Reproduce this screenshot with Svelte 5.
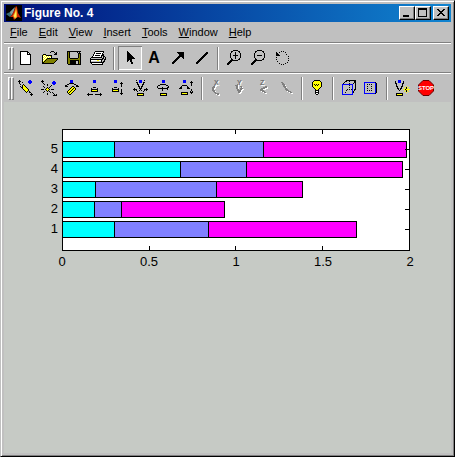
<script>
  const inks = { k: '#000', y: '#ff0', b: '#00f', w: '#fff', g: '#808080', l: '#c0c0c0', o: '#808000' };

  // Each icon is a 16 x 16 pixel map: one letter for one inked pixel.
  const art = {
    new: `

..kkkkkkkk
..kwwwwwwkk
..kwwwwwwkwk
..kwwwwwwkkkk
..kwwwwwwwwwk
..kwwwwwwwwwk
..kwwwwwwwwwk
..kwwwwwwwwwk
..kwwwwwwwwwk
..kwwwwwwwwwk
..kwwwwwwwwwk
..kwwwwwwwwwk
..kwwwwwwwwwk
..kkkkkkkkkkk`,
    open: `

.........kkk
........k...k.k
.............kk
.kkk........kkk
kywykkkkkk
kwywywywyk
kywywywywk
kwywykkkkkkkkkkk
kywykooooooooook
kwykooooooooook
kykooooooooook
kkooooooooook
kkkkkkkkkkkk`,
    save: `

.kkkkkkkkkkkkkk
.koklllllllklk
.kokllllllllkkk
.kokllllllllkok
.kokllllllllkok
.kokllllllllkok
.kokllllllllkok
.kookkkkkkkkook
.kooooooooooook
.kookkkkkkkkkok
.kookkkkkkllkok
.kookkkkkkllkok
.kookkkkkkllkok
..kkkkkkkkkkkkk`,
    print: `

.....kkkkkkkkk
....kwwwwwwwwk
....kwkkkkkwk
...kwwwwwwwwkk
...kwkkkkkwkkk
..kwwwwwwwwklkk
.kkkkkkkkkkklklk
klllllllllllkklk
kkkkkkkkkkkkklkk
kwwwwwwyywwkllk
kllllllllllklkk
kkkkkkkkkkkkkk
.kwwwwwwwwwwk
..kkkkkkkkkkk`,
    pointer: `

.....k
.....kk
.....kkk
.....kkkk
.....kkkkk
.....kkkkkk
.....kkkkkkk
.....kkkkkkkk
.....kkkkk
.....kk.kk
.....k..kk
.........kk
.........kk`,
    arrow: `


.......kkkkkkk
........kkkkkk
.........kkkkk
.........kkkkk
........kkkkkk
.......kkk..kk
......kkk....k
.....kkk
....kkk
...kkk
..kkk
..kk`,
    line: `


............kk
...........kkk
..........kkk
.........kkk
........kkk
.......kkk
......kkk
.....kkk
....kkk
...kkk
..kkk
..kk`,
    zoomIn: `
.......kkkkk
.....kk.....kk
.....k...k...k
....k....k....k
....k....k....k
....k..kkkkk..k
....k....k....k
....k....k....k
.....k...k...k
.....kk.....kk
....kkkkkkkk
...kkk
..kkk
.kkk
.kk`,
    zoomOut: `
.......kkkkk
.....kk.....kk
.....k.......k
....k.........k
....k.........k
....k..kkkkk..k
....k.........k
....k.........k
.....k.......k
.....kk.....kk
....kkkkkkkk
...kkk
..kkk
.kkk
.kk`,
    rotate: `

.......k.k
..k..k.....k
..kk
..kkk.......k
..kkkk
..............k
..k
..............k
..k
..............k
...k
.............k
.....k.....k
.......k.k`,
    orbitCamera: `
.k.........bb
kkk.......bbbb
.k..k.....bbbb
.k.........bb
..k..k
....kyk
..k.kyyk
...kkyyyk
....kyyyyk
.....kyyyyk
......kyyyk
.......kyk.k
........k..kk
.............k
............kkk
.............k`,
    orbitLight: `
.k
kkk.........bb
.k.........bbbb
..k........bbbb
...k..k.....bb
......k...k
..k......k
...k..k.k
.....kyk
kkk.kyyyk.kkk
.....kyk
...k..k.k
..k......k.k
......k.....k
......k......k.k
............kkkk
..............k`,
    pan: `
......bbb
......bbb
......bbb
.....kkkkk
...kk.....kk
.kk.........kk
.kkk....kk..kkk
.......kyyk
......kyykyk
.....kyykyyk
....kyykyyk
...kyykyyk
...kykyyk
....kyyk
.....kk`,
    dollyHorizontal: `
......bbb
......bbb
......bbb




......kkk
....k.....k
....kkkkkkk
....kyyyyyk
....kkkkkkk

.k...........k
kkkkkk..kkkkkkk
.k...........k`,
    dollyVertical: `
....bbb
....bbb
....bbb....k
..........kkk
...........k
...........k
...........k
....kkk
..k.....k
..kkkkkkk..k
..kyyyyyk..k
..kkkkkkk..k
...........k
..........kkk
...........k`,
    dollyForward: `
...k..bbb..k
......bbb
...kk.bbb.kk
....k.....k
....kk...kk
.....k...k
.....kk.kk
......k.k
.k....kkk....k
kkkk...k...kkkk
.k.k..k.k..k.k
....k.....k

....kkkkkkk
....kyyyyyk
....kkkkkkk`,
    zoomCamera: `
......bbb
......bbb
......bbb

....kkkkkk
..kk......kk
.k..........k
.k....k....kk
..kkkkkkkkkk
......k....k
......k


....kkkkkkk
....kyyyyyk
....kkkkkkk`,
    roll: `
....bbb
....bbb.....k
....bbb....kkk
............k
............k
...kkkkk....k
..k.....k
.kk.....kk
kkk.....kkk
............k
............k
...........k.k
..kkkkkkk..kkk
..kyyyyyk...k
..kkkkkkk`,
    axisX: `




.....gg
....gg
...gg
..ggg
..gg
..gg
..ggg
...gg
....gg
.....gggg
.......gg`,
    axisY: `




....g
..ggg..g
...gg..gg
...gg...g
...gg..ggg
....gg.gg
....gggg
.....ggg
.....gg`,
    axisZ: `






.........gg
.......gggg
.....gggg
....ggg
....gggg
......ggg
........gg`,
    axisNone: `


..gg
...gg
...ggg
....gg
....ggg
.....gg
......gg
......ggg
.......ggg
.........ggg
...........gg`,
    bulb: `
....kkkkkk
...kyyyyyyk
..kyyyyyyyyk
..kyyyyyyyyk
..kykykykyyk
..kyykykyyyk
..kyyyyyyyyk
...kyyyyyyk
....kyyyyk
.....kyyk
.....kkkk
.....kwwk
.....kkkk
.....kwwk
......kk`,
    perspective: `
.....kkkkkkkkkk
....kk..k....kk
...k.........kk
..k.....k...k.k
.bbbbbbbbbbb..k
.b......k..b..k
.b.........b..k
.b......k..b..k
.b.........b..k
.b....k.k.kb.kk
.b...k.....b.k
.b.........bk
.b..k......bk
.b.........b
.bbbbbbbbbbb`,
    orthographic: `


bbbbbbbbbbbk
b..........bk
b..k.k.k...bk
b..........bk
b..k...k...bk
b..........bk
b..k...k...bk
b..........bk
b..k.k.k...bk
b..........bk
b..........bk
bbbbbbbbbbbk`,
    sceneLight: `
...bbb
k..bbb..k
k..bbb..k
kk.....kk
.k.....k
.k.....k
.kk...kk...y
..k...k..y.k.y
..kk.kk...yky
...k.k..yykyyyy
....k.....yky
.........y.k.y
...........y
.kkkkkkk
.kyyyyyk
.kkkkkkk`
  };

  const letters = { axisX: 'X', axisY: 'Y', axisZ: 'Z' };

  function pixels(name) {
    const out = [];
    art[name].slice(1).split('\n').forEach((row, y) => {
      for (const m of row.matchAll(/([a-z])\1*/g)) {
        out.push({ x: m.index, y, w: m[0].length, c: inks[m[1]] });
      }
    });
    return out;
  }

  const menus = ['File', 'Edit', 'View', 'Insert', 'Tools', 'Window', 'Help'];

  const figureTools = [
    ['new', 'New figure'], ['open', 'Open'], ['save', 'Save'], ['print', 'Print'], null,
    ['pointer', 'Edit plot'], ['text', 'Insert text'], ['arrow', 'Insert arrow'], ['line', 'Insert line'], null,
    ['zoomIn', 'Zoom in'], ['zoomOut', 'Zoom out'], ['rotate', 'Rotate 3D']
  ];

  const cameraTools = [
    ['orbitCamera', 'Orbit camera'], ['orbitLight', 'Orbit scene light'], ['pan', 'Pan and tilt camera'],
    ['dollyHorizontal', 'Move camera horizontally'], ['dollyVertical', 'Move camera vertically'],
    ['dollyForward', 'Move camera forward'], ['zoomCamera', 'Zoom camera'], ['roll', 'Roll camera'], null,
    ['axisX', 'Principal axis X'], ['axisY', 'Principal axis Y'], ['axisZ', 'Principal axis Z'], ['axisNone', 'No principal axis'], null,
    ['bulb', 'Toggle scene light'], null,
    ['perspective', 'Perspective projection'], ['orthographic', 'Orthographic projection'], null,
    ['sceneLight', 'Reset camera and light'], ['stop', 'Stop']
  ];

  let tool = $state('pointer');

  const xMax = 2;
  const xTicks = [0, 0.5, 1, 1.5, 2];
  const series = [
    { label: 5, values: [0.3, 0.86, 0.827] },
    { label: 4, values: [0.682, 0.38, 0.902] },
    { label: 3, values: [0.192, 0.698, 0.495] },
    { label: 2, values: [0.187, 0.155, 0.595] },
    { label: 1, values: [0.3, 0.545, 0.854] }
  ];
</script>

{#snippet icon(name)}
  {#if name === 'text'}
    <span class="letter">A</span>
  {:else if name === 'stop'}
    <svg viewBox="0 0 16 16" aria-hidden="true">
      <path d="M5 .5h6L15.500 5v6L11 15.500H5L.5 11V5z" fill="#f00" stroke="#600" />
      <text x="8" y="10" text-anchor="middle" class="stop">STOP</text>
    </svg>
  {:else}
    <svg viewBox="0 0 16 16" shape-rendering="crispEdges" aria-hidden="true">
      {#if name.startsWith('axis')}
        {#each pixels(name) as p}
          <rect x={p.x + 1} y={p.y + 1} width={p.w} height="1" fill="#fff" />
        {/each}
      {/if}
      {#each pixels(name) as p}
        <rect x={p.x} y={p.y} width={p.w} height="1" fill={p.c} />
      {/each}
      {#if letters[name]}
        <text x="5" y="6" class="axis" fill="#fff">{letters[name]}</text>
        <text x="4" y="5" class="axis" fill="#707070">{letters[name]}</text>
      {/if}
    </svg>
  {/if}
{/snippet}

{#snippet toolbar(items, label, kind)}
  <div class="toolbar {kind}" role="toolbar" aria-label={label}>
    <span class="grip"></span><span class="grip"></span>
    {#each items as item}
      {#if item}
        <button
          class="tool"
          class:pressed={tool === item[0]}
          aria-label={item[1]}
          title={item[1]}
          disabled={item[0].startsWith('axis')}
          onclick={() => (tool = item[0])}
        >{@render icon(item[0])}</button>
      {:else}
        <span class="divider"></span>
      {/if}
    {/each}
  </div>
{/snippet}

<div class="window">
  <header>
    <svg class="logo" viewBox="0 0 16 16" aria-hidden="true">
      <rect width="16" height="16" fill="#000" />
      <path d="M0 9l4-2 3-3 2-1-3 7-2 2z" fill="#376b78" />
      <path d="M4 7l3-3 2-2-2 6-2 2z" fill="#8aa0a0" />
      <path d="M4 12l2-2 2-4 2-5 1 1 1 6 3 5-3-1-2 1-2 2-1-3z" fill="#d22808" />
      <path d="M7 11l2-4 1-5 1 5v5l-2 2-1-2z" fill="#f8b020" />
      <path d="M8 11l2-5v5l-1 2z" fill="#ffef60" />
    </svg>
    <h1>Figure No. 4</h1>
    <button class="caption" aria-label="Minimize">
      <svg viewBox="0 0 12 10" shape-rendering="crispEdges"><path d="M2 7h6v2H2z" /></svg>
    </button>
    <button class="caption" aria-label="Maximize">
      <svg viewBox="0 0 12 10" shape-rendering="crispEdges"><path fill-rule="evenodd" d="M1 0h9v9H1zM2 2v6h7V2z" /></svg>
    </button>
    <button class="caption close" aria-label="Close">
      <svg viewBox="0 0 12 10" shape-rendering="crispEdges"><path d="M2 1h2v1h1v1h2V2h1V1h2v1H9v1H8v1H7v1h1v1h1v1h1v1H8V7H7V6H5v1H4v1H2V7h1V6h1V5h1V4H4V3H3V2H2z" /></svg>
    </button>
  </header>

  <nav>
    {#each menus as menu}
      <button><u>{menu[0]}</u>{menu.slice(1)}</button>
    {/each}
  </nav>

  {@render toolbar(figureTools, 'Figure', 'figure')}
  {@render toolbar(cameraTools, 'Camera', 'camera')}

  <main>
    <div class="plot">
      {#each series as row}
        <div class="row">
          <span class="ylabel">{row.label}</span>
          {#each row.values as value, i}
            <span class="bar s{i}" style:width="{(value / xMax) * 100}%"></span>
          {/each}
          <span class="ytick"></span>
        </div>
      {/each}
      {#each xTicks.slice(1, -1) as t}
        <span class="xtick" style:left="{(t / xMax) * 100}%"></span>
      {/each}
    </div>
    <div class="xaxis">
      {#each xTicks as t}
        <span class="xlabel" style:left="{(t / xMax) * 100}%">{t}</span>
      {/each}
    </div>
  </main>
</div>

<style>
  .window {
    box-sizing: border-box;
    display: flex;
    flex-direction: column;
    min-height: 100vh;
    padding: 3px;
    background: #c0c0c0;
    border: 1px solid;
    border-color: #c0c0c0 #000 #000 #c0c0c0;
    box-shadow: inset 1px 1px #fff, inset -1px -1px #808080;
    font: 11px/14px "Liberation Sans", Arial, sans-serif;
    color: #000;
  }

  button {
    box-sizing: border-box;
    margin: 0;
    padding: 0;
    border: 0;
    background: none;
    font: inherit;
    color: inherit;
  }

  svg {
    display: block;
    width: 16px;
    height: 16px;
  }

  header {
    display: flex;
    align-items: center;
    height: 18px;
    padding: 0 2px;
    background: linear-gradient(90deg, #00107b, #1084d0);
  }

  h1 {
    flex: 1;
    margin: 0 0 0 2px;
    font-size: 12px;
    line-height: 18px;
    color: #fff;
  }

  .caption {
    width: 16px;
    height: 14px;
    padding: 1px;
    background: #c0c0c0;
    border: 1px solid;
    border-color: #fff #000 #000 #fff;
    box-shadow: inset -1px -1px #808080;
  }

  .caption svg {
    width: 12px;
    height: 10px;
  }

  .close {
    margin-left: 2px;
  }

  nav {
    display: flex;
    height: 20px;
    align-items: center;
    padding-left: 1px;
  }

  nav button {
    padding: 0 6px 0 5px;
  }

  .toolbar {
    box-sizing: border-box;
    display: flex;
    align-items: center;
    height: 30px;
    padding: 1px 0 0 4px;
    border-top: 1px solid #808080;
    box-shadow: inset 0 1px #fff;
  }

  .grip {
    box-sizing: border-box;
    width: 3px;
    height: 23px;
    background: #c0c0c0;
    border: 1px solid;
    border-color: #fff #808080 #808080 #fff;
  }

  .divider {
    box-sizing: border-box;
    width: 2px;
    height: 23px;
    margin: 0 3px;
    background: #fff;
    border-left: 1px solid #808080;
  }

  .tool {
    display: flex;
    align-items: center;
    width: 24px;
    height: 24px;
    padding: 0 4px;
  }

  .camera .tool {
    width: 23px;
    padding: 0 3px 0 4px;
  }

  .tool svg {
    flex: none;
  }

  .pressed {
    background: #cfcfcf;
    box-shadow: inset 1px 1px #808080, inset -1px -1px #fff;
  }

  .letter {
    width: 16px;
    font-size: 16px;
    font-weight: bold;
    line-height: 16px;
    text-align: center;
  }

  .stop {
    font-size: 6px;
    font-weight: bold;
    fill: #fff;
  }

  .axis {
    font-size: 7px;
    font-weight: bold;
  }

  main {
    flex: 1;
    padding: 27px 41px 0 58px;
    background: #c6cac5;
    font-size: 13px;
    line-height: 16px;
  }

  .plot {
    position: relative;
    display: flex;
    flex-direction: column;
    gap: 3px;
    padding: 11px 0 12px;
    background: #fff;
    border: 1px solid #000;
  }

  .row {
    position: relative;
    display: flex;
    height: 17px;
  }

  .bar {
    box-sizing: border-box;
    border: 1px solid #000;
    border-left: 0;
  }

  .s0 { background: #0ff; }
  .s1 { background: #8080ff; }
  .s2 { background: #f0f; }

  .ylabel {
    position: absolute;
    right: 100%;
    margin-right: 5px;
  }

  .ytick {
    position: absolute;
    top: 8px;
    right: 0;
    width: 4px;
    height: 1px;
    background: #000;
  }

  .xtick {
    box-sizing: border-box;
    position: absolute;
    top: 0;
    bottom: 0;
    width: 1px;
    margin-left: -1px;
    border: solid #000;
    border-width: 4px 0;
  }

  .xaxis {
    position: relative;
    height: 22px;
  }

  .xlabel {
    position: absolute;
    top: 3px;
    transform: translateX(-50%);
  }
</style>
